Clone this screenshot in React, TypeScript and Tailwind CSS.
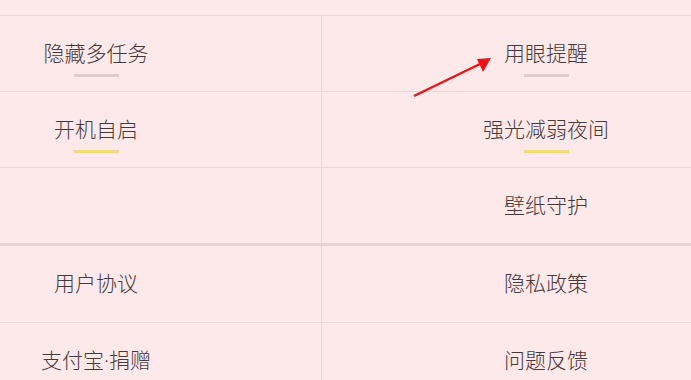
import React from 'react'

type Cell = { label: string; bar?: 'gray' | 'yellow' }

const rows: { left: Cell; right: Cell; thick?: boolean; h: string }[] = [
  { left: { label: '隐藏多任务', bar: 'gray' }, right: { label: '用眼提醒', bar: 'gray' }, h: 'h-[76px]' },
  { left: { label: '开机自启', bar: 'yellow' }, right: { label: '强光减弱夜间', bar: 'yellow' }, h: 'h-[76px]' },
  { left: { label: '' }, right: { label: '壁纸守护' }, thick: true, h: 'h-[78px]' },
  { left: { label: '用户协议' }, right: { label: '隐私政策' }, h: 'h-[77px]' },
  { left: { label: '支付宝·捐赠' }, right: { label: '问题反馈' }, h: 'h-[76px]' },
]

function Item({ cell }: { cell: Cell }) {
  return (
    <div className="w-[160px] flex flex-col items-center pt-[24px]">
      <span className="text-[21px] leading-[29px] h-[29px] font-light text-[#47393a] whitespace-nowrap">{cell.label}</span>
      {cell.bar && (
        <div
          className={
            cell.bar === 'gray'
              ? 'mt-[5px] w-[45px] h-[3px] bg-[#e0cccf]'
              : 'mt-[5px] w-[45px] h-[3px] bg-[#f6d97c]'
          }
        />
      )}
    </div>
  )
}

export default function App() {
  return (
    <div className="relative w-[691px] h-[380px] overflow-hidden bg-[#fee9ea] font-['Roboto','Noto_Sans_CJK_SC',sans-serif]">
      <div className="h-[16px] border-b border-[#e8d6d8]" />
      {rows.map((row, i) => (
        <div
          key={i}
          className={
            row.thick
              ? `flex ${row.h} border-b-[3px] border-[#e6d3d5]`
              : `flex ${row.h} border-b border-[#e8d6d8]`
          }
        >
          <div className="w-[322px] border-r border-[#e8d6d8] pl-[16px]">
            <Item cell={row.left} />
          </div>
          <div className="flex-1 pl-[144px]">
            <Item cell={row.right} />
          </div>
        </div>
      ))}
      <svg className="absolute left-0 top-0 pointer-events-none" width="691" height="380">
        <line x1="414" y1="96" x2="482" y2="63" stroke="#e8141a" strokeWidth="2.5" />
        <polygon points="491,58 477,59 483,72" fill="#e8141a" />
      </svg>
    </div>
  )
}
